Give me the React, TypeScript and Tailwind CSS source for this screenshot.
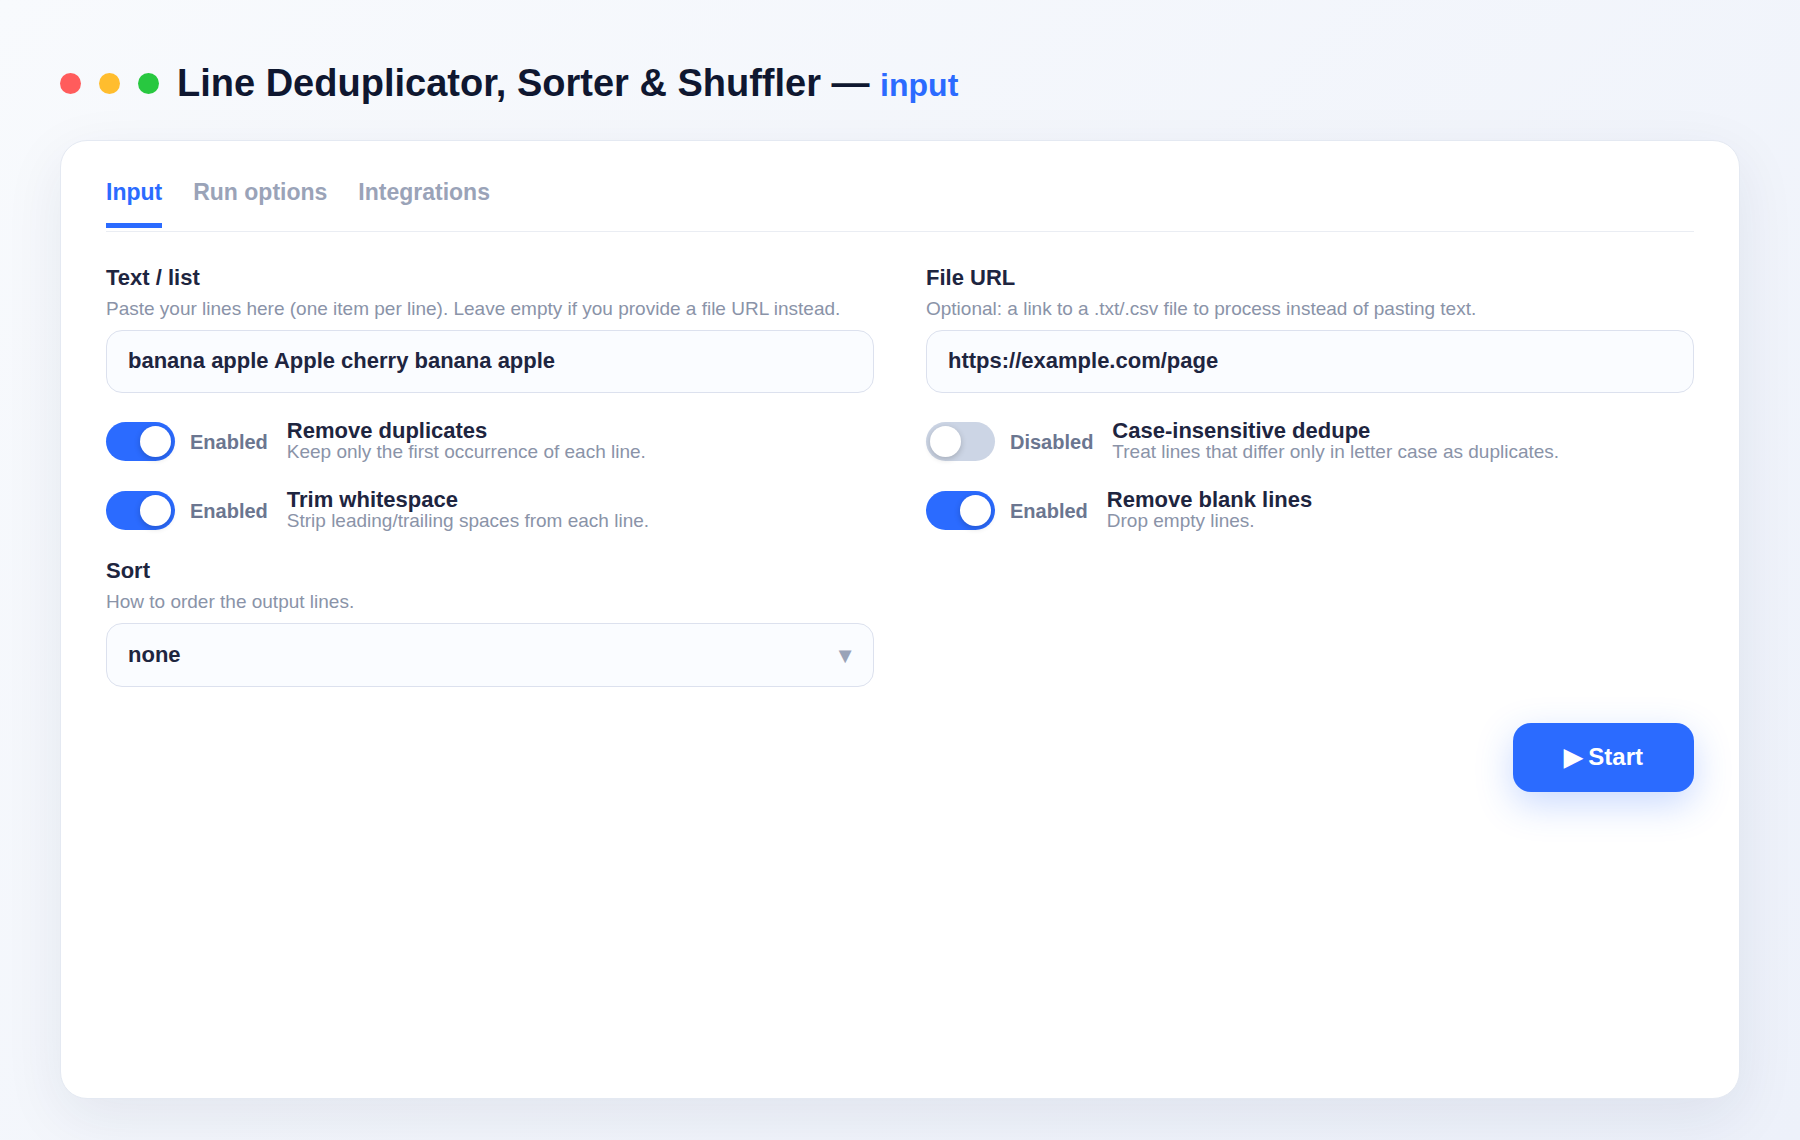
import { useState } from "react";

const tabs = ["Input", "Run options", "Integrations"];

const Field = ({ id, label, hint, children }: any) => (
  <div className="flex flex-col">
    <label htmlFor={id} className="text-[22px] leading-6 font-bold text-[#1e2540]">
      {label}
    </label>
    <p id={`${id}-hint`} className="mt-1.5 mb-[9px] text-[19px] leading-[25px] text-[#8a93a8]">
      {hint}
    </p>
    {children}
  </div>
);

const Toggle = ({ id, label, hint, defaultOn }: any) => {
  const [on, setOn] = useState(defaultOn);

  return (
    <div className="flex items-center h-[41px]">
      <input
        id={id}
        type="checkbox"
        role="switch"
        checked={on}
        onChange={() => setOn(!on)}
        aria-describedby={`${id}-hint`}
        className="flex shrink-0 items-center appearance-none w-[69px] h-[39px] px-1 rounded-full bg-[#ccd5e5] checked:bg-[#2b6bff] cursor-pointer before:size-[31px] before:rounded-full before:bg-white before:shadow-[0_2px_6px_rgba(0,0,0,0.2)] before:transition before:content-[''] checked:before:translate-x-[30px]"
      />
      <span className="ml-[15px] text-[20px] leading-6 font-bold text-[#6b7690]">
        {on ? "Enabled" : "Disabled"}
      </span>
      <div className="ml-[19px] pb-0.5 flex flex-col">
        <label htmlFor={id} className="text-[22px] leading-[21px] font-bold text-[#1e2540]">
          {label}
        </label>
        <span id={`${id}-hint`} className="text-[19px] leading-[21px] text-[#8a93a8]">
          {hint}
        </span>
      </div>
    </div>
  );
};

const fieldClass =
  "w-full px-[21px] rounded-2xl border border-[#dce1ee] bg-[#fafcff] text-[22px] leading-7 font-bold text-[#1e2540] focus:outline-none focus:border-[#2b6bff]";

export default function App() {
  const [activeTab, setActiveTab] = useState("Input");
  const [text, setText] = useState("banana apple Apple cherry banana apple");
  const [url, setUrl] = useState("https://example.com/page");
  const [sort, setSort] = useState("none");

  return (
    <div className="min-h-screen flex flex-col px-15 pt-[59px] pb-[41px] bg-linear-135 from-[#f8fafd] to-[#edf1fa] font-['Liberation_Sans',Arial,sans-serif]">
      <header className="flex items-center gap-[18px] mb-[33px]">
        <span className="size-[21px] rounded-full bg-[#ff5c5c]" />
        <span className="size-[21px] rounded-full bg-[#ffbd2e]" />
        <span className="size-[21px] rounded-full bg-[#28c840]" />
        <h1 className="text-[38px] leading-12 font-bold text-[#0f1730]">
          Line Deduplicator, Sorter &amp; Shuffler —{" "}
          <span className="text-[32px] leading-none text-[#2b6bff]">input</span>
        </h1>
      </header>

      <main className="flex-1 flex flex-col px-[45px] pt-8 pb-8 rounded-[27px] border border-[#e4e9f2] bg-white shadow-[0_18px_60px_rgba(20,40,80,0.08)]">
        <div role="tablist" className="flex gap-[31px] border-b border-[#eaedf3] pb-[3px]">
          {tabs.map((tab) => (
            <button
              key={tab}
              type="button"
              role="tab"
              aria-selected={tab === activeTab}
              onClick={() => setActiveTab(tab)}
              className={`pt-[5px] pb-[17px] border-b-5 text-[23px] leading-7 font-bold cursor-pointer ${
                tab === activeTab
                  ? "border-[#2b6bff] text-[#2b6bff]"
                  : "border-transparent text-[#9aa3b8]"
              }`}
            >
              {tab}
            </button>
          ))}
        </div>

        <form className="flex flex-col" onSubmit={(e) => e.preventDefault()}>
          <div className="mt-[34px] grid grid-cols-2 gap-x-[52px] gap-y-7">
            <Field
              id="text"
              label="Text / list"
              hint="Paste your lines here (one item per line). Leave empty if you provide a file URL instead."
            >
              <input
                id="text"
                type="text"
                value={text}
                onChange={(e) => setText(e.target.value)}
                aria-describedby="text-hint"
                className={`h-[63px] pb-0.5 ${fieldClass}`}
              />
            </Field>
            <Field
              id="url"
              label="File URL"
              hint="Optional: a link to a .txt/.csv file to process instead of pasting text."
            >
              <input
                id="url"
                type="text"
                value={url}
                onChange={(e) => setUrl(e.target.value)}
                aria-describedby="url-hint"
                className={`h-[63px] pb-0.5 ${fieldClass}`}
              />
            </Field>
            <Toggle
              id="dedupe"
              label="Remove duplicates"
              hint="Keep only the first occurrence of each line."
              defaultOn={true}
            />
            <Toggle
              id="ignoreCase"
              label="Case-insensitive dedupe"
              hint="Treat lines that differ only in letter case as duplicates."
              defaultOn={false}
            />
            <Toggle
              id="trim"
              label="Trim whitespace"
              hint="Strip leading/trailing spaces from each line."
              defaultOn={true}
            />
            <Toggle
              id="removeBlank"
              label="Remove blank lines"
              hint="Drop empty lines."
              defaultOn={true}
            />
            <Field id="sort" label="Sort" hint="How to order the output lines.">
              <div className="relative">
                <select
                  id="sort"
                  value={sort}
                  onChange={(e) => setSort(e.target.value)}
                  aria-describedby="sort-hint"
                  className={`h-16 appearance-none ${fieldClass}`}
                >
                  <option value="none">none</option>
                  <option value="asc">asc</option>
                  <option value="desc">desc</option>
                  <option value="shuffle">shuffle</option>
                </select>
                <span
                  aria-hidden="true"
                  className="absolute inset-y-0 right-[18px] flex items-center text-[22px] text-[#9aa3b8] pointer-events-none"
                >
                  ▼
                </span>
              </div>
            </Field>
          </div>

          <button
            type="submit"
            className="mt-9 self-end h-[69px] px-[51px] pb-0.5 rounded-[18px] bg-[#2b6bff] text-2xl font-bold text-white shadow-[0_12px_36px_rgba(43,107,255,0.25)] cursor-pointer"
          >
            ▶ Start
          </button>
        </form>
      </main>
    </div>
  );
}
